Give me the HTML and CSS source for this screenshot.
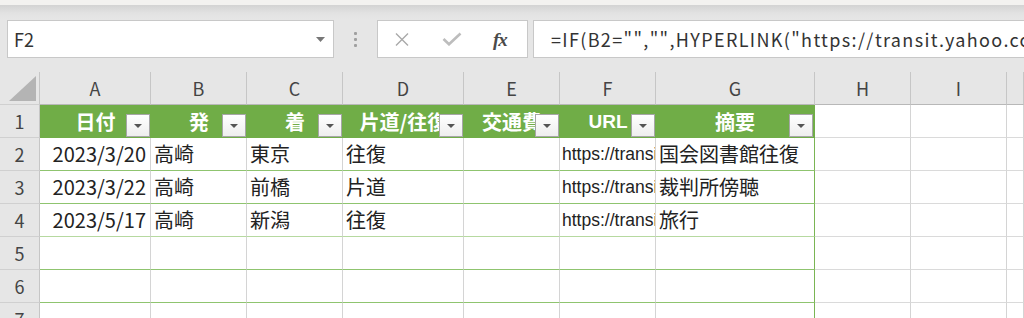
FILE: index.html
```html
<!DOCTYPE html>
<html lang="ja">
<head>
<meta charset="utf-8">
<link rel="stylesheet" href="styles.css">
</head>
<body>
<div class="app">
  <div class="topstrip"></div>
  <div class="fbar">
    <div class="namebox">
      <span class="namebox-text">F2</span>
      <svg class="nb-arrow" width="9" height="5" viewBox="0 0 9 5"><path d="M0 0H9L4.5 5Z" fill="#777"/></svg>
    </div>
    <div class="dots"><i></i><i></i><i></i></div>
    <div class="fxbox">
      <svg class="ic-x" width="18" height="13" viewBox="0 0 18 13"><path d="M3 0.5L15 12.5M15 0.5L3 12.5" stroke="#a9a9a9" stroke-width="1.4" fill="none"/></svg>
      <svg class="ic-ok" width="20" height="14" viewBox="0 0 20 14"><path d="M1.5 7L7 12.3L18.5 1.5" stroke="#bdbdbd" stroke-width="2.6" fill="none"/></svg>
      <span class="ic-fx">fx</span>
    </div>
    <div class="formula">=IF(B2="","",HYPERLINK("https://transit.yahoo.co.jp/search/result?from="&amp;B2&amp;"&amp;to="&amp;C2,"https://transit.yahoo.co.jp"))</div>
  </div>
  <div class="sheet">
    <div class="row colhead">
      <div class="c rh corner"><svg width="27" height="25" viewBox="0 0 27 25"><path d="M27 0V25H0Z" fill="#b4b4b4"/></svg></div>
      <div class="c">A</div><div class="c">B</div><div class="c">C</div><div class="c">D</div><div class="c">E</div><div class="c">F</div><div class="c">G</div><div class="c">H</div><div class="c">I</div><div class="c"></div>
    </div>
    <div class="row thead">
      <div class="c rh">1</div>
      <div class="c th">日付<span class="fb"></span></div>
      <div class="c th">発<span class="fb"></span></div>
      <div class="c th">着<span class="fb"></span></div>
      <div class="c th">片道/往復<span class="fb"></span></div>
      <div class="c th">交通費<span class="fb"></span></div>
      <div class="c th th-latin">URL<span class="fb"></span></div>
      <div class="c th last">摘要<span class="fb"></span></div>
      <div class="c g"></div><div class="c g"></div><div class="c g"></div>
    </div>
    <div class="row body">
      <div class="c rh">2</div>
      <div class="c t num">2023/3/20</div><div class="c t">高崎</div><div class="c t">東京</div><div class="c t">往復</div><div class="c t"></div><div class="c t url"><span class="clip">https://transit.yahoo.co.jp/search</span></div><div class="c t last">国会図書館往復</div>
      <div class="c g"></div><div class="c g"></div><div class="c g"></div>
    </div>
    <div class="row body">
      <div class="c rh">3</div>
      <div class="c t num">2023/3/22</div><div class="c t">高崎</div><div class="c t">前橋</div><div class="c t">片道</div><div class="c t"></div><div class="c t url"><span class="clip">https://transit.yahoo.co.jp/search</span></div><div class="c t last">裁判所傍聴</div>
      <div class="c g"></div><div class="c g"></div><div class="c g"></div>
    </div>
    <div class="row body">
      <div class="c rh">4</div>
      <div class="c t num light">2023/5/17</div><div class="c t light">高崎</div><div class="c t light">新潟</div><div class="c t light">往復</div><div class="c t light"></div><div class="c t url light"><span class="clip">https://transit.yahoo.co.jp/search</span></div><div class="c t last light">旅行</div>
      <div class="c g"></div><div class="c g"></div><div class="c g"></div>
    </div>
    <div class="row body">
      <div class="c rh">5</div>
      <div class="c t"></div><div class="c t"></div><div class="c t"></div><div class="c t"></div><div class="c t"></div><div class="c t"></div><div class="c t last"></div>
      <div class="c g"></div><div class="c g"></div><div class="c g"></div>
    </div>
    <div class="row body">
      <div class="c rh">6</div>
      <div class="c t"></div><div class="c t"></div><div class="c t"></div><div class="c t"></div><div class="c t"></div><div class="c t"></div><div class="c t last"></div>
      <div class="c g"></div><div class="c g"></div><div class="c g"></div>
    </div>
    <div class="row body">
      <div class="c rh">7</div>
      <div class="c t"></div><div class="c t"></div><div class="c t"></div><div class="c t"></div><div class="c t"></div><div class="c t"></div><div class="c t last"></div>
      <div class="c g"></div><div class="c g"></div><div class="c g"></div>
    </div>
  </div>
</div>
</body>
</html>
```
FILE: styles.css
```css
* { box-sizing: border-box; }
html, body { margin: 0; padding: 0; }
body {
  width: 1024px;
  height: 318px;
  overflow: hidden;
  background: #e6e6e6;
  font-family: "Noto Sans CJK JP", "Noto Sans", sans-serif;
  color: #222;
}
.app { width: 1024px; }
.topstrip {
  height: 5px;
  background: #f3f2f0;
}
.fbar {
  height: 67px;
  background: linear-gradient(#d3d3d3 0px, #e2e2e2 8px, #e6e6e6 14px);
  display: flex;
  align-items: flex-start;
  padding-top: 15px;
  padding-left: 7px;
}
.namebox {
  width: 327px;
  height: 38px;
  background: #fff;
  border: 1px solid #c8c8c8;
  display: flex;
  align-items: center;
  justify-content: space-between;
  padding: 0 8px 0 6px;
}
.namebox-text {
  font-size: 18px;
  color: #333;
  line-height: 1;
}
.dots {
  width: 43px;
  height: 38px;
  display: flex;
  flex-direction: column;
  align-items: center;
  justify-content: center;
  gap: 3px;
}
.dots i {
  display: block;
  width: 3px;
  height: 3px;
  background: #a0a0a0;
  border-radius: 1px;
}
.fxbox {
  width: 151px;
  height: 38px;
  background: #fff;
  border: 1px solid #c8c8c8;
  display: flex;
  align-items: center;
  padding-left: 15px;
}
.ic-x { margin-right: 31px; }
.ic-ok { margin-right: 31px; }
.ic-fx {
  font-family: "Liberation Serif", "DejaVu Serif", serif;
  font-style: italic;
  font-weight: bold;
  font-size: 19px;
  color: #4a4a4a;
  line-height: 1;
  letter-spacing: -1px;
}
.formula {
  margin-left: 5px;
  flex: 1;
  min-width: 0;
  height: 38px;
  background: #fff;
  border: 1px solid #c8c8c8;
  border-right: none;
  font-size: 18px;
  color: #333;
  line-height: 36px;
  padding-left: 17px;
  letter-spacing: 1.35px;
  white-space: nowrap;
  overflow: hidden;
}
.sheet { background: #fff; }
.row {
  display: grid;
  grid-template-columns: 40px 111px 96px 96px 121px 96px 96px 159px 96px 96px 1fr;
  height: 33px;
}
.c {
  border-right: 1px solid #d4d4d4;
  border-bottom: 1px solid #d4d4d4;
  min-width: 0;
  overflow: hidden;
  white-space: nowrap;
  position: relative;
}
.colhead .c {
  background: #e6e6e6;
  border-right: 1px solid #c6c6c6;
  border-bottom: 1px solid #b8b8b8;
  font-size: 18px;
  color: #444;
  display: flex;
  align-items: center;
  justify-content: center;
  line-height: 1;
}
.colhead .corner {
  align-items: flex-end;
  justify-content: flex-end;
  padding: 0 3px 3px 0;
}
.rh {
  background: #e6e6e6;
  border-right: 1px solid #c6c6c6 !important;
  border-bottom: 1px solid #d0d0d0 !important;
  font-size: 18px;
  color: #444;
  display: flex;
  align-items: center;
  justify-content: center;
  line-height: 1;
}
.th {
  background: #70ad47;
  border-right: none;
  border-bottom: none;
  color: #fff;
  font-weight: bold;
  font-size: 20px;
  display: flex;
  align-items: center;
  justify-content: center;
  line-height: 1;
}
.th.last { border-right: 1px solid #70ad47; }
.th-latin {
  font-family: "Liberation Sans", Arial, sans-serif;
  font-size: 19px;
}
.fb {
  position: absolute;
  right: 1px;
  bottom: 1px;
  width: 24px;
  height: 23px;
  background: linear-gradient(#ffffff, #eeeeee);
  border: 1px solid #a6a6a6;
}
.fb::after {
  content: "";
  position: absolute;
  left: 7px;
  top: 9px;
  border-left: 4px solid transparent;
  border-right: 4px solid transparent;
  border-top: 4px solid #555;
}
.t {
  border-bottom: 1px solid #8fc46f;
  font-size: 20px;
  line-height: 32px;
  padding-left: 3px;
  color: #222;
}
.t.light { border-bottom-color: #b6d9a0; }
.t.num { text-align: right; padding-right: 4px; padding-left: 0; }
.t.url {
  font-family: "Liberation Sans", Arial, sans-serif;
  font-size: 17.5px;
  padding-left: 2px;
}
.clip {
  display: block;
  width: 93px;
  overflow: hidden;
}
.t.last { border-right: 1px solid #7ab554; }
.g { border-bottom-color: #dadada; }
```
